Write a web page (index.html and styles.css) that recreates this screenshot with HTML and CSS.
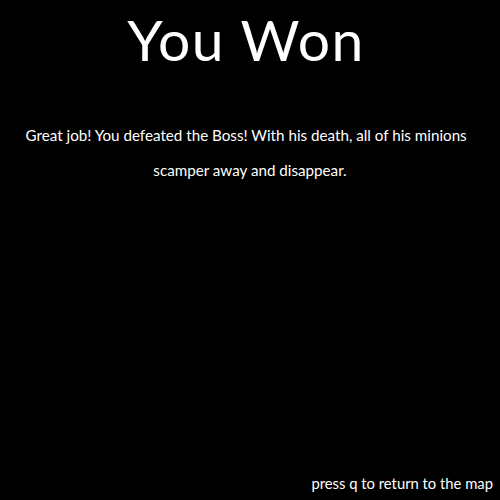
FILE: index.html
```html
<!DOCTYPE html>
<html>
<head>
<meta charset="utf-8">
<link rel="stylesheet" href="styles.css">
</head>
<body>
<main class="screen">
  <h1 class="title">You Won</h1>
  <p class="message">Great job! You defeated the Boss! With his death, all of his minions&nbsp;&nbsp;<br>scamper away and disappear.</p>
  <div class="hint">press q to return to the map</div>
</main>
</body>
</html>
```
FILE: styles.css
```css
html, body {
  margin: 0;
  padding: 0;
  background: #000;
}
.screen {
  width: 500px;
  height: 500px;
  display: flex;
  flex-direction: column;
  color: #fff;
  font-family: Lato, "Open Sans", sans-serif;
}
.title {
  margin: 0;
  padding: 8px 8px 0 0;
  font-size: 57px;
  font-weight: 400;
  letter-spacing: 1.5px;
  line-height: 62px;
  text-align: center;
}
.message {
  margin: 48px 0 0 0;
  font-size: 15.2px;
  line-height: 35px;
  text-align: center;
}
.hint {
  margin-top: auto;
  padding: 0 7px 7px 0;
  font-size: 14.8px;
  line-height: 20px;
  text-align: right;
}
```
